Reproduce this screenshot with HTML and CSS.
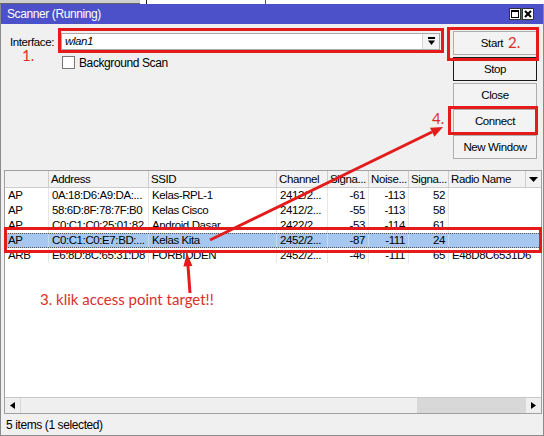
FILE: index.html
```html
<!DOCTYPE html>
<html>
<head>
<meta charset="utf-8">
<link rel="stylesheet" href="styles.css">
</head>
<body>
<div class="page">
  <div class="strip"><span class="strip-a"></span><span class="strip-b"></span><span class="strip-c"></span></div>
  <div class="window">
    <div class="titlebar">
      <span class="title">Scanner (Running)</span>
      <svg class="tb-icons" width="25" height="12" viewBox="0 0 25 12">
        <rect x="0.5" y="0.5" width="11" height="11" fill="#fff" stroke="#333"/>
        <rect x="2.5" y="2.5" width="7" height="7" fill="none" stroke="#000"/>
        <rect x="2" y="2" width="8" height="2" fill="#000"/>
        <rect x="13.5" y="0.5" width="11" height="11" fill="#fff" stroke="#333"/>
        <path d="M16 3L22 9M22 3L16 9" stroke="#000" stroke-width="2"/>
      </svg>
    </div>
    <div class="content">
      <div class="top">
        <div class="form">
          <div class="row-iface">
            <span class="lbl">Interface:</span>
            <div class="select">
              <span class="val">wlan1</span>
              <span class="drop"><svg width="9" height="9" viewBox="0 0 9 9"><rect x="1" y="0" width="7" height="2" fill="#000"/><path d="M1 3.5h7L4.5 8z" fill="#000"/></svg></span>
            </div>
          </div>
          <div class="row-check"><span class="cb"></span><span class="cb-text">Background Scan</span></div>
        </div>
        <div class="buttons">
          <div class="btn btn-start">Start</div>
          <div class="btn btn-default">Stop</div>
          <div class="btn">Close</div>
          <div class="btn">Connect</div>
          <div class="btn">New Window</div>
        </div>
      </div>
      <div class="table">
        <div class="thead">
          <span class="th"></span>
          <span class="th">Address</span>
          <span class="th">SSID</span>
          <span class="th">Channel</span>
          <span class="th">Signa...</span>
          <span class="th">Noise...</span>
          <span class="th">Signa...</span>
          <span class="th">Radio Name</span>
          <span class="th th-menu"><svg width="9" height="5" viewBox="0 0 9 5"><path d="M0 0h9L4.5 5z" fill="#000"/></svg></span>
        </div>
        <div class="tbody">
          <div class="tr"><span class="td">AP</span><span class="td">0A:18:D6:A9:DA:...</span><span class="td">Kelas-RPL-1</span><span class="td">2412/2...</span><span class="td num">-61</span><span class="td num">-113</span><span class="td num">52</span><span class="td last"></span></div>
          <div class="tr"><span class="td">AP</span><span class="td">58:6D:8F:78:7F:B0</span><span class="td">Kelas Cisco</span><span class="td">2412/2...</span><span class="td num">-55</span><span class="td num">-113</span><span class="td num">58</span><span class="td last"></span></div>
          <div class="tr"><span class="td">AP</span><span class="td">C0:C1:C0:25:01:82</span><span class="td">Android Dasar</span><span class="td">2422/2...</span><span class="td num">-53</span><span class="td num">-114</span><span class="td num">61</span><span class="td last"></span></div>
          <div class="tr selected"><span class="td">AP</span><span class="td">C0:C1:C0:E7:BD:...</span><span class="td">Kelas Kita</span><span class="td">2452/2...</span><span class="td num">-87</span><span class="td num">-111</span><span class="td num">24</span><span class="td last"></span></div>
          <div class="tr"><span class="td">ARB</span><span class="td">E6:8D:8C:65:31:D8</span><span class="td">FORBIDDEN</span><span class="td">2452/2...</span><span class="td num">-46</span><span class="td num">-111</span><span class="td num">65</span><span class="td last">E48D8C6531D6</span></div>
        </div>
        <div class="hscroll">
          <span class="sb-btn"><svg width="5" height="7" viewBox="0 0 5 7"><path d="M5 0v7L0 3.5z" fill="#000"/></svg></span>
          <span class="sb-track"><span class="sb-thumb"></span></span>
          <span class="sb-btn sb-right"><svg width="5" height="7" viewBox="0 0 5 7"><path d="M0 0v7L5 3.5z" fill="#000"/></svg></span>
        </div>
      </div>
      <div class="status">5 items (1 selected)</div>
    </div>
  </div>

  <svg class="overlay" width="544" height="436" viewBox="0 0 544 436">
    <g fill="none" stroke="#e41b1b" stroke-width="3">
      <rect x="59.5" y="29.5" width="383" height="22"/>
      <rect x="448.5" y="28.5" width="89" height="31"/>
      <rect x="449.5" y="107.5" width="87" height="26"/>
      <rect x="5.5" y="228.5" width="535" height="23"/>
      <path d="M210 240L432 132"/>
      <path d="M190 293L188 266"/>
    </g>
    <g fill="#e41b1b">
      <polygon points="443,127 434.4,136.7 430,127.7"/>
      <polygon points="187,253 192.4,266 183.4,266.5"/>
    </g>
  </svg>
  <div class="ann ann1">1.</div>
  <div class="ann ann2">2.</div>
  <div class="ann ann4">4.</div>
  <div class="ann ann3">3. klik access point target!!</div>
</div>
</body>
</html>
```
FILE: styles.css
```css
* { box-sizing: border-box; }
html, body { margin: 0; padding: 0; }
body {
  width: 544px;
  height: 436px;
  overflow: hidden;
  background: #fff;
  font-family: "Liberation Sans", Arial, sans-serif;
  font-size: 11.5px;
  letter-spacing: -0.4px;
  color: #000;
}
.page { position: relative; width: 544px; height: 436px; }

.strip { height: 4px; display: flex; background: #fff; }
.strip-a { width: 140px; background: #cfcfcf; border-bottom: 1px solid #666; }
.strip-b { width: 120px; border-left: 1px solid #222; border-right: 1px solid #555; margin-left: 6px; }
.strip-c { flex: 1; }

.window {
  height: 432px;
  background: #f0f0f0;
  border-left: 1px solid #8a8a8a;
  border-right: 1px solid #8a8a8a;
  border-bottom: 1px solid #8a8a8a;
  display: flex;
  flex-direction: column;
}
.titlebar {
  height: 20px;
  flex: none;
  background: #4c50c9;
  color: #fff;
  display: flex;
  align-items: center;
  justify-content: space-between;
  padding: 0 9px 0 6px;
}
.title { font-size: 12px; }
.tb-icons { display: block; }

.content {
  flex: 1;
  display: flex;
  flex-direction: column;
  padding: 0 1px 0 3px;
}
.top {
  height: 146px;
  flex: none;
  display: flex;
  justify-content: space-between;
}
.form { padding: 9px 0 0 6px; }
.row-iface { display: flex; align-items: center; height: 17px; }
.lbl { width: 51px; }
.select {
  width: 379px;
  height: 17px;
  background: #fff;
  border: 1px solid #a9a9a9;
  display: flex;
}
.val { flex: 1; font-style: italic; padding-left: 3px; line-height: 15px; }
.drop {
  width: 17px;
  border-left: 1px solid #d6d6d6;
  background: #f4f4f4;
  display: flex;
  align-items: center;
  justify-content: center;
}
.row-check { margin: 6px 0 0 52px; display: flex; align-items: center; height: 13px; }
.cb { width: 13px; height: 13px; border: 1px solid #777; background: #fff; margin-right: 4px; }
.cb-text { font-size: 12px; }

.buttons {
  width: 84px;
  margin-right: 5px;
  padding-top: 7px;
  display: flex;
  flex-direction: column;
  gap: 2px;
}
.btn {
  height: 24px;
  background: #f3f3f3;
  border: 1px solid #adadad;
  display: flex;
  align-items: center;
  justify-content: center;
  font-size: 11.5px;
}
.btn-start { padding-right: 6px; }
.btn-default { border-color: #1a1a1a; }

.table {
  height: 244px;
  flex: none;
  border: 1px solid #a0a0a0;
  background: #fff;
  display: flex;
  flex-direction: column;
}
.thead, .tr {
  display: grid;
  grid-template-columns: 44px 100px 128px 51px 41px 40px 40px 1fr;
}
.thead {
  grid-template-columns: 44px 100px 128px 51px 41px 40px 40px 77px 1fr;
  height: 17px;
  flex: none;
  background: #f2f2f2;
  border-bottom: 1px solid #cdcdcd;
}
.th {
  border-right: 1px solid #cdcdcd;
  padding-left: 2px;
  line-height: 16px;
  white-space: nowrap;
  overflow: hidden;
}
.th-menu { border-right: none; display: flex; align-items: center; justify-content: center; padding: 0; }
.tbody { flex: 1; }
.tr { height: 15px; }
.td {
  border-right: 1px solid #e6e6e6;
  padding: 0 3px;
  line-height: 15px;
  white-space: nowrap;
  overflow: hidden;
}
.td.num { text-align: right; }
.td.last { border-right: none; }
.tr.selected { background: #a6c7ef; outline: 1px dotted #555; outline-offset: -1px; }
.tr.selected .td { border-right-color: #c3d8f2; }

.hscroll {
  height: 16px;
  flex: none;
  display: flex;
  border-top: 1px solid #c8c8c8;
  background: #efefef;
}
.sb-btn { width: 16px; display: flex; align-items: center; justify-content: center; border-right: 1px solid #d8d8d8; }
.sb-right { border-right: none; border-left: 1px solid #d8d8d8; }
.sb-track { flex: 1; display: flex; justify-content: flex-end; }
.sb-thumb { width: 108px; background: #d8d8d8; }

.status { flex: 1; padding-left: 2px; display: flex; align-items: center; font-size: 12px; }

.overlay { position: absolute; left: 0; top: 0; pointer-events: none; }
.ann {
  position: absolute;
  color: #d9302c;
  font-family: Lato, "Open Sans", sans-serif;
  font-size: 15px;
  line-height: 15px;
  letter-spacing: 0;
  white-space: nowrap;
}
.ann1 { left: 22px; top: 48px; }
.ann2 { left: 508px; top: 35px; }
.ann4 { left: 432px; top: 111px; }
.ann3 { left: 40px; top: 292px; }
```
